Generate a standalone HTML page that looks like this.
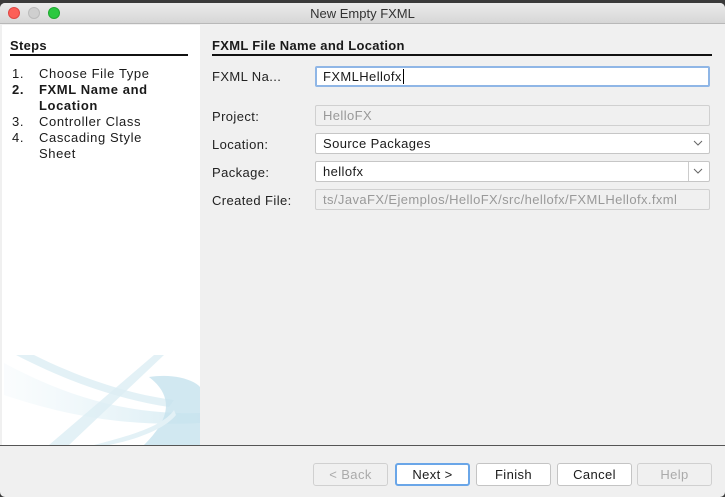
<!DOCTYPE html>
<html><head><style>
*{margin:0;padding:0;box-sizing:border-box}
body{width:725px;height:497px;overflow:hidden;background:#3a3a3a;font-family:"Liberation Sans",sans-serif;font-size:13px;color:#1a1a1a;position:relative}
.abs{position:absolute}
.win{position:absolute;left:0;top:3px;width:725px;height:494px;background:#f0f0f0;border-radius:5px;overflow:hidden}
.title{position:absolute;left:0;top:0;width:725px;height:21px;background:linear-gradient(#ebebeb,#d6d6d6);border-bottom:1px solid #b8b8b8;text-align:center;font-size:13px;line-height:22px;color:#333}
.dot{position:absolute;top:4px;width:12px;height:12px;border-radius:50%}
.left{position:absolute;left:2px;top:22px;width:198px;height:420px;background:#fff}
.sep{position:absolute;left:0;top:442px;width:725px;height:1px;background:#555}
.h{font-weight:bold;font-size:13px;letter-spacing:.3px}
.lbl{position:absolute;left:212px;color:#222;letter-spacing:.4px}
.fld{position:absolute;left:315px;width:395px;height:21px;background:#fff;border:1px solid #c6c6c6;border-radius:2px;padding-left:7px;line-height:19px;letter-spacing:.4px}
.dis{background:#f0f0f0;color:#999;border-color:#d0d0d0}
.btn{position:absolute;top:460px;width:75px;height:23px;background:#fff;border:1px solid #c4c4c4;border-radius:3px;text-align:center;line-height:21px;letter-spacing:.4px}
.chev{position:absolute;right:5px;top:3px;width:12px;height:12px}
.st{position:relative;padding-left:27px;height:16px}
.st b,.st i{position:absolute;left:0;font-style:normal}
</style></head><body>
<div class="win">
<div class="title">New Empty FXML
<div class="dot" style="left:8px;background:#fc5f57;border:1px solid #df4744"></div>
<div class="dot" style="left:28px;background:#cfcfcf;border:1px solid #bbb"></div>
<div class="dot" style="left:48px;background:#2ac940;border:1px solid #1fa82f"></div>
</div>
<div class="left">
<div class="abs h" style="left:8px;top:13px">Steps</div>
<div class="abs" style="left:8px;top:29px;width:178px;height:2px;background:#111"></div>
<div class="abs" style="left:10px;top:41px;line-height:16px;letter-spacing:.6px">
<div class="st"><i>1.</i>Choose File Type</div>
<div class="st" style="font-weight:bold"><b>2.</b>FXML Name and</div>
<div class="st" style="font-weight:bold">Location</div>
<div class="st"><i>3.</i>Controller Class</div>
<div class="st"><i>4.</i>Cascading Style</div>
<div class="st">Sheet</div>
</div>
<svg class="abs" style="left:2px;top:330px" width="196" height="90" viewBox="0 0 196 90">
<defs><linearGradient id="g" x1="0" x2="1"><stop offset="0" stop-color="#d6ebf3" stop-opacity=".2"/><stop offset="1" stop-color="#bfe0ec"/></linearGradient></defs>
<path d="M0 8 C60 40 120 60 196 58 L196 68 C120 72 60 60 0 40Z" fill="url(#g)" opacity=".6"/>
<path d="M12 0 L30 0 C80 25 130 40 170 45 L165 52 C120 45 70 30 12 0Z" fill="#dcedf4" opacity=".8"/>
<path d="M45 90 L150 0 L160 0 L65 90Z" fill="#dcedf4" opacity=".8"/>
<path d="M145 22 C170 18 190 25 196 32 L196 90 L140 90 C160 70 175 45 145 22Z" fill="#c5e2ed" opacity=".8"/>
<path d="M90 90 C130 80 160 70 170 55 L172 60 C160 75 130 85 105 90Z" fill="#e3f1f6"/>
</svg>
</div>
<div class="abs h" style="left:212px;top:35px">FXML File Name and Location</div>
<div class="abs" style="left:212px;top:51px;width:500px;height:2px;background:#111"></div>
<div class="lbl" style="top:66px">FXML Na...</div>
<div class="fld" style="top:63px;border:2px solid #8fb6e6;line-height:17px;padding-left:6px">FXMLHellofx<span style="border-left:1px solid #000;margin-left:1px"></span></div>
<div class="lbl" style="top:106px">Project:</div>
<div class="fld dis" style="top:102px">HelloFX</div>
<div class="lbl" style="top:134px">Location:</div>
<div class="fld" style="top:130px">Source Packages<svg class="chev" viewBox="0 0 12 12"><path d="M2 4 L6 8 L10 4" fill="none" stroke="#666" stroke-width="1"/></svg></div>
<div class="lbl" style="top:162px">Package:</div>
<div class="fld" style="top:158px">hellofx<div class="abs" style="right:20px;top:0;width:1px;height:19px;background:#ccc"></div><svg class="chev" viewBox="0 0 12 12"><path d="M2 4 L6 8 L10 4" fill="none" stroke="#666" stroke-width="1"/></svg></div>
<div class="lbl" style="top:190px">Created File:</div>
<div class="fld dis" style="top:186px;overflow:hidden;white-space:nowrap">ts/JavaFX/Ejemplos/HelloFX/src/hellofx/FXMLHellofx.fxml</div>
<div class="sep"></div>
<div class="btn" style="left:313px;color:#aaa;background:#f0f0f0;border-color:#d0d0d0">&lt; Back</div>
<div class="btn" style="left:395px;border:2px solid #6aa6e8;line-height:19px">Next &gt;</div>
<div class="btn" style="left:476px">Finish</div>
<div class="btn" style="left:557px">Cancel</div>
<div class="btn" style="left:637px;color:#aaa;background:#f0f0f0;border-color:#d0d0d0">Help</div>
</div>
</body></html>
